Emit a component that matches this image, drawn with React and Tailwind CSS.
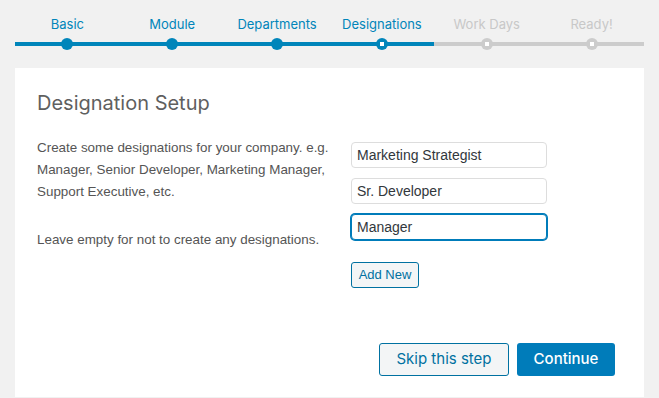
import React from "react"

const steps = [
  { label: "Basic", state: "done" },
  { label: "Module", state: "done" },
  { label: "Departments", state: "done" },
  { label: "Designations", state: "active" },
  { label: "Work Days", state: "todo" },
  { label: "Ready!", state: "todo" },
]

function Step({ label, state }) {
  const blue = state !== "todo"
  return (
    <div className="flex-1 flex flex-col items-center">
      <div className={`h-[18px] leading-[18px] text-[13px] ${blue ? "text-[#0085ba]" : "text-[#c8c8c8]"}`}>
        {label}
      </div>
      <div className="relative mt-[5px] h-3 w-full flex items-center justify-center">
        <div className={`absolute inset-x-0 top-1 h-1 ${blue ? "bg-[#0085ba]" : "bg-[#cccccc]"}`}></div>
        <div
          className={`relative w-3 h-3 rounded-full flex items-center justify-center ${
            blue ? "bg-[#0085ba]" : "bg-[#cccccc]"
          }`}
        >
          {state !== "done" && <div className="w-1 h-1 bg-white"></div>}
        </div>
      </div>
    </div>
  )
}

export default function App() {
  const values = ["Marketing Strategist", "Sr. Developer", "Manager"]

  return (
    <div className="min-h-[398px] bg-[#f1f1f1] pt-[15px] font-['Inter',sans-serif]">
      {/* Progress steps */}
      <div className="flex mx-[15px]">
        {steps.map((s) => (
          <Step key={s.label} {...s} />
        ))}
      </div>

      {/* Card */}
      <div className="mx-[15px] mt-[18px] bg-white pl-[22px] pr-[29px] pt-[22px] pb-[21px]">
        <h1 className="text-[20px] leading-[26px] text-[#5f5f5f]">Designation Setup</h1>

        <div className="flex mt-[21px] font-['Liberation_Sans',sans-serif]">
          <div className="w-[314px] text-[13.4px] leading-[22px] text-[#555]">
            <p>
              Create some designations for your company. e.g. Manager, Senior Developer, Marketing Manager,
              Support Executive, etc.
            </p>
            <p className="mt-[26px]">Leave empty for not to create any designations.</p>
          </div>

          <div className="flex flex-col pt-[5px]">
            {values.map((v, i) => (
              <input
                key={v}
                readOnly
                value={v}
                className={`w-[196px] h-[26px] mb-[10px] px-[5px] rounded-[4px] text-[14px] text-[#32373c] bg-white outline-none border ${
                  i === 2 ? "border-[#007cba] ring-1 ring-[#007cba]" : "border-[#dddddd]"
                }`}
              />
            ))}
            <button className="mt-[12px] w-[68px] h-[26px] rounded-[3px] border border-[#0071a1] bg-[#f3f5f6] text-[13px] text-[#0071a1]">
              Add New
            </button>
          </div>
        </div>

        <div className="flex justify-end gap-2 mt-[55px]">
          <button className="w-[130px] h-[33px] rounded-[3px] border border-[#0071a1] bg-[#f3f5f6] text-[15px] text-[#0071a1]">
            Skip this step
          </button>
          <button className="w-[98px] h-[33px] rounded-[3px] bg-[#007cba] text-[15px] font-medium text-white">
            Continue
          </button>
        </div>
      </div>
    </div>
  )
}
